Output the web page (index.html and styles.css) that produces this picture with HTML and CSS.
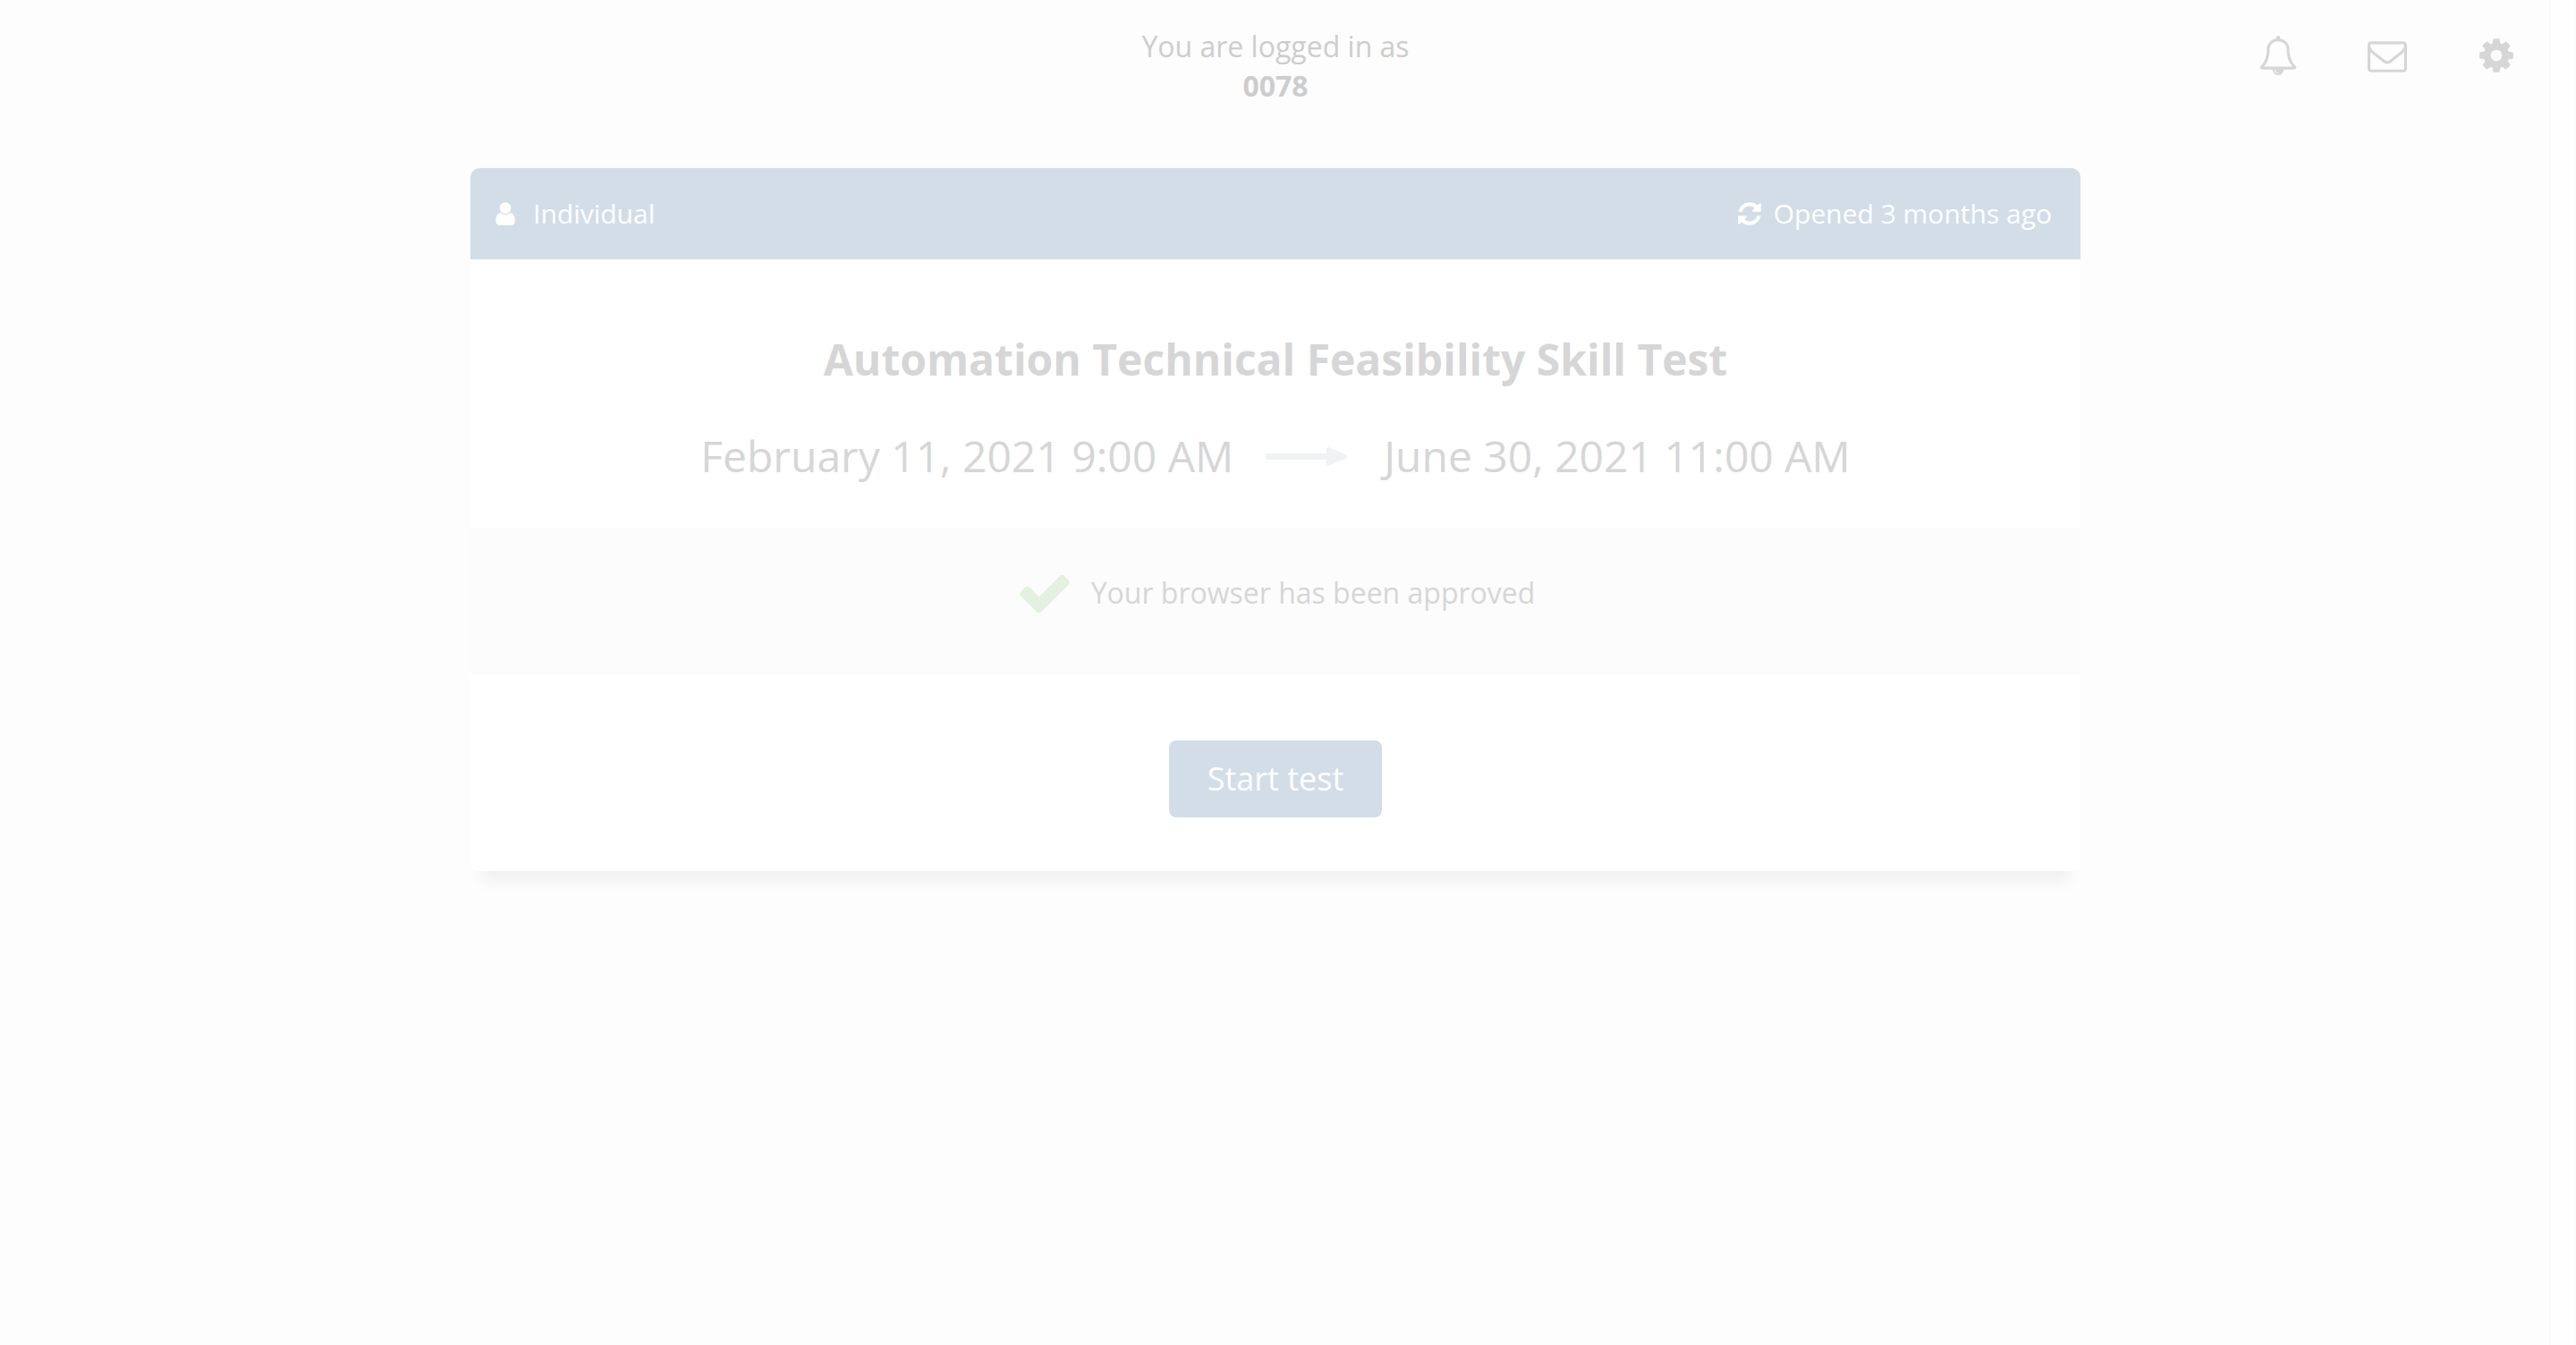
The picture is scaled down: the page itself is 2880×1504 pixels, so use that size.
FILE: index.html
```html
<!DOCTYPE html>
<html lang="en">
<head>
<meta charset="utf-8">
<title>Automation Technical Feasibility Skill Test</title>
<link rel="stylesheet" href="styles.css">
</head>
<body>
<div class="page">
  <header class="topbar">
    <p class="account">You are logged in as<br><strong>0078</strong></p>
    <nav class="tools">
      <button class="tool" type="button" aria-label="Notifications"><svg class="icon" viewBox="0 0 1792 1792"><path d="M912 1696q0-16-16-16-59 0-101.5-42.5t-42.5-101.5q0-16-16-16t-16 16q0 73 51.5 124.5t124.5 51.5q16 0 16-16zm-666-288h1300q-266-300-266-832 0-51-24-105t-69-103-121.5-80.5-169.5-31.5-169.5 31.5-121.5 80.5-69 103-24 105q0 532-266 832zm1482 0q0 52-38 90t-90 38h-448q0 106-75 181t-181 75-181-75-75-181h-448q-52 0-90-38t-38-90q50-42 91-88t85-119.5 74.5-158.5 50-206 19.5-260q0-152 117-282.5t307-158.5q-8-19-8-39 0-40 28-68t68-28 68 28 28 68q0 20-8 39 190 28 307 158.5t117 282.5q0 139 19.5 260t50 206 74.5 158.5 85 119.5 91 88z"/></svg></button>
      <button class="tool" type="button" aria-label="Messages"><svg class="icon" viewBox="0 0 1792 1792"><path d="M1664 1504v-768q-32 36-69 66-268 206-426 338-51 43-83 67t-86.5 48.5-102.5 24.5h-2q-48 0-102.5-24.5t-86.5-48.5-83-67q-158-132-426-338-37-30-69-66v768q0 13 9.5 22.5t22.5 9.5h1472q13 0 22.5-9.5t9.5-22.5zm0-1051v-24.5l-.5-13-3-12.5-5.5-9-9-7.5-14-2.5h-1472q-13 0-22.5 9.5t-9.5 22.5q0 168 147 284 193 152 401 317 6 5 35 29.5t46 37.5 44.5 31.5 50.5 27.5 43 9h2q20 0 43-9t50.5-27.5 44.5-31.5 46-37.5 35-29.5q208-165 401-317 54-43 100.5-115.5t46.5-131.5zm128-37v1088q0 66-47 113t-113 47h-1472q-66 0-113-47t-47-113v-1088q0-66 47-113t113-47h1472q66 0 113 47t47 113z"/></svg></button>
      <button class="tool" type="button" aria-label="Settings"><svg class="icon" viewBox="0 0 1792 1792"><path d="M1152 896q0-106-75-181t-181-75-181 75-75 181 75 181 181 75 181-75 75-181zm512-109v222q0 12-8 23t-20 13l-185 28q-19 54-39 91 35 50 107 138 10 12 10 25t-9 23q-27 37-99 108t-94 71q-12 0-26-9l-138-108q-44 23-91 38-16 136-29 186-7 28-36 28h-222q-14 0-24.5-8.5t-11.5-21.5l-28-184q-49-16-90-37l-141 107q-10 9-25 9-14 0-25-11-126-114-165-168-7-10-7-23 0-12 8-23 15-21 51-66.5t54-70.5q-27-50-41-99l-183-27q-13-2-21-12.5t-8-23.5v-222q0-12 8-23t19-13l186-28q14-46 39-92-40-57-107-138-10-12-10-24 0-10 9-23 26-36 98.5-107.5t94.5-71.5q13 0 26 10l138 107q44-23 91-38 16-136 29-186 7-28 36-28h222q14 0 24.5 8.5t11.5 21.5l28 184q49 16 90 37l142-107q9-9 24-9 13 0 25 10 129 119 165 170 7 8 7 22 0 12-8 23-15 21-51 66.5t-54 70.5q26 50 41 98l183 28q13 2 21 12.5t8 23.5z"/></svg></button>
    </nav>
  </header>
  <main class="card">
    <div class="card-head">
      <span class="tag tag-type"><svg class="icon" viewBox="0 0 1792 1792"><path d="M1536 1399q0 109-62.5 187t-150.5 78h-854q-88 0-150.5-78t-62.5-187q0-85 8.5-160.5t31.5-152 58.5-131 94-89 134.5-34.5q131 128 313 128t313-128q76 0 134.5 34.5t94 89 58.5 131 31.5 152 8.5 160.5zm-256-887q0 159-112.5 271.5t-271.5 112.5-271.5-112.5-112.5-271.5 112.5-271.5 271.5-112.5 271.5 112.5 112.5 271.5z"/></svg>Individual</span>
      <span class="tag"><svg class="icon" viewBox="0 0 1792 1792"><path d="M1639 1056q0 5-1 7-64 268-268 434.5t-478 166.5q-146 0-282.5-55t-243.5-157l-129 129q-19 19-45 19t-45-19-19-45v-448q0-26 19-45t45-19h448q26 0 45 19t19 45-19 45l-137 137q71 66 161 102t187 36q134 0 250-65t186-179q11-17 53-117 8-23 30-23h192q13 0 22.5 9.5t9.5 22.5zm25-800v448q0 26-19 45t-45 19h-448q-26 0-45-19t-19-45 19-45l138-138q-148-137-349-137-134 0-250 65t-186 179q-11 17-53 117-8 23-30 23h-199q-13 0-22.5-9.5t-9.5-22.5v-7q65-268 270-434.5t480-166.5q146 0 284 55.5t245 156.5l130-129q19-19 45-19t45 19 19 45z"/></svg>Opened 3 months ago</span>
    </div>
    <section class="summary">
      <h1 class="title">Automation Technical Feasibility Skill Test</h1>
      <p class="dates">
        <time datetime="2021-02-11T09:00">February 11, 2021 9:00 AM</time>
        <svg class="arrow" viewBox="0 0 96 22" role="img" aria-label="to"><path d="M1 8H68V3Q68 1 70 1L91 10Q93 12 91 13L70 22Q68 22 68 21V15H1Q0 15 0 14V9Q0 8 1 8Z"/></svg>
        <time datetime="2021-06-30T11:00">June 30, 2021 11:00 AM</time>
      </p>
    </section>
    <section class="status">
      <svg class="check" viewBox="0 0 1792 1792"><path d="M1671 566q0 40-28 68l-724 724-136 136q-28 28-68 28t-68-28l-136-136-362-362q-28-28-28-68t28-68l136-136q28-28 68-28t68 28l294 295 656-657q28-28 68-28t68 28l136 136q28 28 28 68z"/></svg>
      <span>Your browser has been approved</span>
    </section>
    <section class="actions">
      <button class="start" type="button">Start test</button>
    </section>
  </main>
</div>
<div class="gutter"></div>
</body>
</html>
```
FILE: styles.css
```css
* {
  box-sizing: border-box;
}

body {
  display: flex;
  min-height: 100vh;
  margin: 0;
  background: #fdfdfd;
  color: #d6d6d6;
  font-family: "Open Sans", "Noto Sans", sans-serif;
  font-size: 32px;
  line-height: 44px;
}

h1,
p {
  margin: 0;
}

svg {
  display: block;
  flex: none;
  fill: currentColor;
}

.page {
  flex: 1;
  min-width: 0;
}

.gutter {
  width: 28px;
  background: #fefefe;
  border-right: 2px solid #fafafa;
  box-shadow: -2px 0 #fafafa;
}

.topbar {
  display: grid;
  grid-template-columns: 1fr auto 1fr;
  align-items: start;
  padding: 30px 39px 0;
}

.account {
  grid-column: 2;
  color: #cdcdcd;
  text-align: center;
}

.tools {
  display: flex;
  justify-content: flex-end;
  gap: 78px;
  padding-top: 10px;
}

.tool {
  padding: 0;
  border: 0;
  background: none;
  color: inherit;
}

.tool .icon {
  width: 44px;
  height: 44px;
}

.card {
  width: calc(100% - 64px);
  max-width: 1800px;
  margin: 70px auto 0;
  border-radius: 10px;
  background: #fff;
  box-shadow: 0 24px 16px -12px rgba(0, 0, 0, 0.05);
}

.card-head {
  display: flex;
  align-items: center;
  justify-content: space-between;
  padding: 29px 32px 29px 24px;
  border-radius: 10px 10px 0 0;
  background: #d3dde7;
  color: #fff;
  font-size: 30px;
}

.tag {
  display: flex;
  align-items: center;
  gap: 12px;
}

.tag-type {
  gap: 16px;
}

.tag .icon {
  width: 30px;
  height: 30px;
}

.summary {
  padding: 78px 32px 46px;
  font-size: 48px;
  line-height: 68px;
  text-align: center;
}

.title {
  font-size: 48px;
  font-weight: 700;
}

.dates {
  display: flex;
  align-items: center;
  justify-content: center;
  gap: 36px;
  margin-top: 40px;
}

.arrow {
  width: 96px;
  height: 22px;
  color: #f1f2f4;
}

.status {
  display: flex;
  align-items: center;
  justify-content: center;
  gap: 20px;
  padding: 41px 32px 59px;
  background: #fcfcfc;
}

.check {
  width: 64px;
  height: 64px;
  color: #e4f0e0;
}

.actions {
  display: flex;
  justify-content: center;
  padding: 74px 32px 60px;
}

.start {
  padding: 18px 43px;
  border: 0;
  border-radius: 8px;
  background: #d3dde7;
  color: #fff;
  font: inherit;
  font-size: 36px;
  line-height: 50px;
}
```
